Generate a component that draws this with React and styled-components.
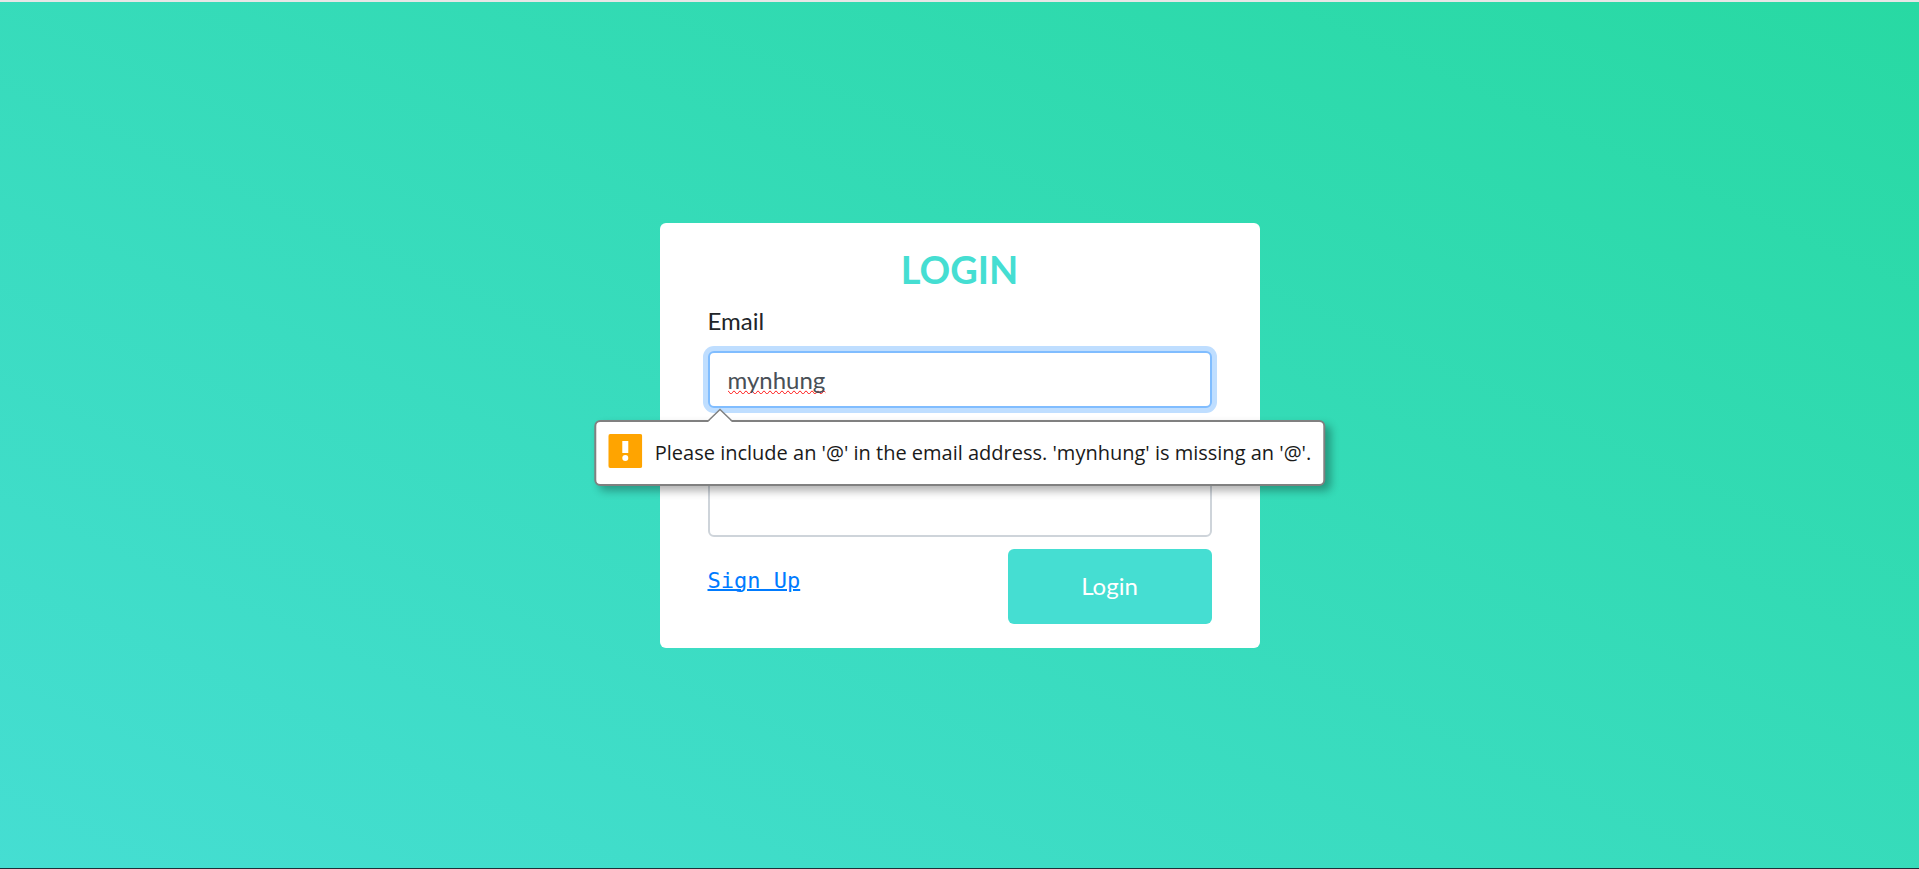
import React from "react";
import styled, { createGlobalStyle } from "styled-components";

const GlobalStyle = createGlobalStyle`
  *, *::before, *::after { box-sizing: border-box; }
  body {
    margin: 0;
    font-family: Lato, "Liberation Sans", sans-serif;
    font-size: 24px;
    line-height: 36px;
    color: #212529;
  }
`;

const Page = styled.main`
  min-height: 100vh;
  display: flex;
  align-items: center;
  justify-content: center;
  padding: 24px;
  border-top: 2px solid #e6e6e6;
  border-bottom: 1px solid #1f2f38;
  background: linear-gradient(to top right, #45ded2, #28d9a3) border-box;
`;

const Card = styled.form`
  width: 100%;
  max-width: 600px;
  padding: 24px 48px;
  border-radius: 6px;
  background: #fff;
`;

const Title = styled.h1`
  margin: 0 0 12px;
  font-size: 38px;
  line-height: 44px;
  font-weight: 700;
  text-align: center;
  color: #45ded2;
`;

const Field = styled.div`
  position: relative;
  margin-bottom: ${(p) => (p.$invalid ? "72px" : "12px")};
`;

const Label = styled.label`
  display: block;
  margin-bottom: 12px;
`;

const TextInput = styled.input`
  display: block;
  width: 100%;
  height: 57px;
  padding: 8px 18px;
  border: 2px solid ${(p) => (p.$active ? "#80bdff" : "#ced4da")};
  border-radius: 6px;
  outline: none;
  background: #fff;
  font: inherit;
  color: #495057;
  box-shadow: ${(p) => (p.$active ? "0 0 0 5px #bfdeff" : "none")};
  text-decoration: ${(p) => (p.$misspelt ? "spelling-error" : "none")};
`;

const Bubble = styled.div`
  position: absolute;
  z-index: 1;
  top: 100%;
  left: 50%;
  transform: translateX(-50%);
  margin-top: 12px;
  display: flex;
  align-items: flex-start;
  gap: 13px;
  padding: 12px;
  border: 2px solid #808080;
  border-radius: 6px;
  background: #fff;
  box-shadow: 5px 5px 8px rgba(0, 0, 0, 0.3);
  font-family: "Open Sans", "Noto Sans", sans-serif;
  font-size: 20px;
  line-height: 38px;
  white-space: nowrap;
  color: #1a1a1a;
`;

const Pointer = styled.svg`
  position: absolute;
  z-index: 2;
  top: 100%;
  left: 0;
`;

const WarningIcon = styled.svg`
  flex: none;
`;

const Actions = styled.div`
  display: flex;
  justify-content: space-between;
  align-items: flex-start;
`;

const SignUp = styled.a`
  margin-top: 14px;
  font-family: "DejaVu Sans Mono", monospace;
  font-size: 22px;
  color: #007bff;
  text-decoration: underline;
  text-decoration-thickness: 2px;
`;

const LoginButton = styled.button`
  width: 204px;
  height: 75px;
  border: 0;
  border-radius: 6px;
  background: #45ded2;
  color: #fff;
  font: inherit;
  cursor: pointer;
`;

export default function App() {
  return (
    <>
      <GlobalStyle />
      <Page>
        <Card noValidate onSubmit={(e) => e.preventDefault()}>
          <Title>LOGIN</Title>
          <Field $invalid>
            <Label htmlFor="email">Email</Label>
            <TextInput
              id="email"
              type="email"
              defaultValue="mynhung"
              aria-describedby="email-error"
              $active
              $misspelt
            />
            <Bubble id="email-error" role="alert">
              <WarningIcon width="34" height="34" viewBox="0 0 34 34" aria-hidden="true">
                <rect width="34" height="34" rx="2" fill="#ffa400" />
                <path d="M14 7h6v12h-6z" fill="#fff" />
                <circle cx="17" cy="24" r="3" fill="#fff" />
              </WarningIcon>
              <span>Please include an '@' in the email address. 'mynhung' is missing an '@'.</span>
            </Bubble>
            <Pointer width="24" height="14" viewBox="0 0 24 14" aria-hidden="true">
              <path d="M0 14L12 1.5L24 14z" fill="#fff" />
              <path d="M0 13L12 1.5L24 13" fill="none" stroke="#808080" strokeWidth="1.5" />
            </Pointer>
          </Field>
          <Field>
            <TextInput type="password" aria-label="Password" />
          </Field>
          <Actions>
            <SignUp href="#signup">Sign Up</SignUp>
            <LoginButton type="submit">Login</LoginButton>
          </Actions>
        </Card>
      </Page>
    </>
  );
}
